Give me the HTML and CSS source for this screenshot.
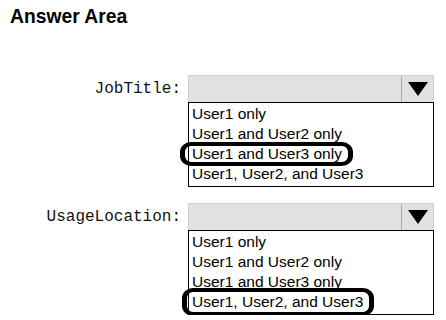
FILE: index.html
```html
<!DOCTYPE html>
<html lang="en">
<head>
    <meta charset="UTF-8">
    <meta name="viewport" content="width=device-width, initial-scale=1.0">
    <title>Answer Area</title>
    <link rel="stylesheet" href="styles.css">
</head>
<body>
    <h1 class="title">Answer Area</h1>

    <div class="answers">
        <div class="field">
            <span class="field-label">JobTitle:</span>
            <div class="select">
                <div class="select-head">
                    <div class="select-value"></div>
                    <div class="select-arrow">
                        <svg width="20" height="14" viewBox="0 0 20 14"><polygon points="0,0 20,0 10,14" fill="#000"/></svg>
                    </div>
                </div>
                <ul class="options">
                    <li>User1 only</li>
                    <li>User1 and User2 only</li>
                    <li><span class="picked">User1 and User3 only</span></li>
                    <li>User1, User2, and User3</li>
                </ul>
            </div>
        </div>

        <div class="field">
            <span class="field-label">UsageLocation:</span>
            <div class="select">
                <div class="select-head">
                    <div class="select-value"></div>
                    <div class="select-arrow">
                        <svg width="20" height="14" viewBox="0 0 20 14"><polygon points="0,0 20,0 10,14" fill="#000"/></svg>
                    </div>
                </div>
                <ul class="options">
                    <li>User1 only</li>
                    <li>User1 and User2 only</li>
                    <li>User1 and User3 only</li>
                    <li><span class="picked picked-tall">User1, User2, and User3</span></li>
                </ul>
            </div>
        </div>
    </div>
</body>
</html>
```

FILE: styles.css
```css
body {
    margin: 0;
    background: #fff;
    color: #000;
    font-family: "Liberation Sans", Arial, sans-serif;
}
.title {
    margin: 0;
    padding: 6px 0 0 10px;
    font-size: 19.3px;
    font-weight: bold;
    line-height: 22px;
}
.answers {
    display: flex;
    flex-direction: column;
    gap: 16px;
    padding-top: 47px;
}
.field {
    display: grid;
    grid-template-columns: 181px 246px;
    column-gap: 7px;
    align-items: start;
}
.field-label {
    justify-self: end;
    padding-top: 6px;
    font-family: "Liberation Mono", "Courier New", monospace;
    font-size: 16px;
    line-height: 16px;
    color: #111;
}
.select-head {
    display: flex;
    height: 27px;
    box-sizing: border-box;
    background: #e1e1e1;
    border: 1px solid #cfcfcf;
    border-bottom: none;
}
.select-value {
    flex: 1;
}
.select-arrow {
    width: 31px;
    display: flex;
    align-items: center;
    justify-content: center;
    border-left: 1px solid #a9a9a9;
}
.options {
    list-style: none;
    margin: 0;
    padding: 1px 0 2px 3px;
    border: 1px solid #000;
    font-size: 15.5px;
    line-height: 20px;
}
.picked {
    position: relative;
    display: inline-block;
}
.picked::after {
    content: '';
    position: absolute;
    left: -12px;
    right: -11px;
    top: -2px;
    bottom: -2px;
    border: 4px solid #000;
    border-width: 4px 5px;
    border-radius: 11px / 10px;
}
.picked-tall::after {
    left: -10px;
    top: -4px;
    bottom: -4px;
}
```
